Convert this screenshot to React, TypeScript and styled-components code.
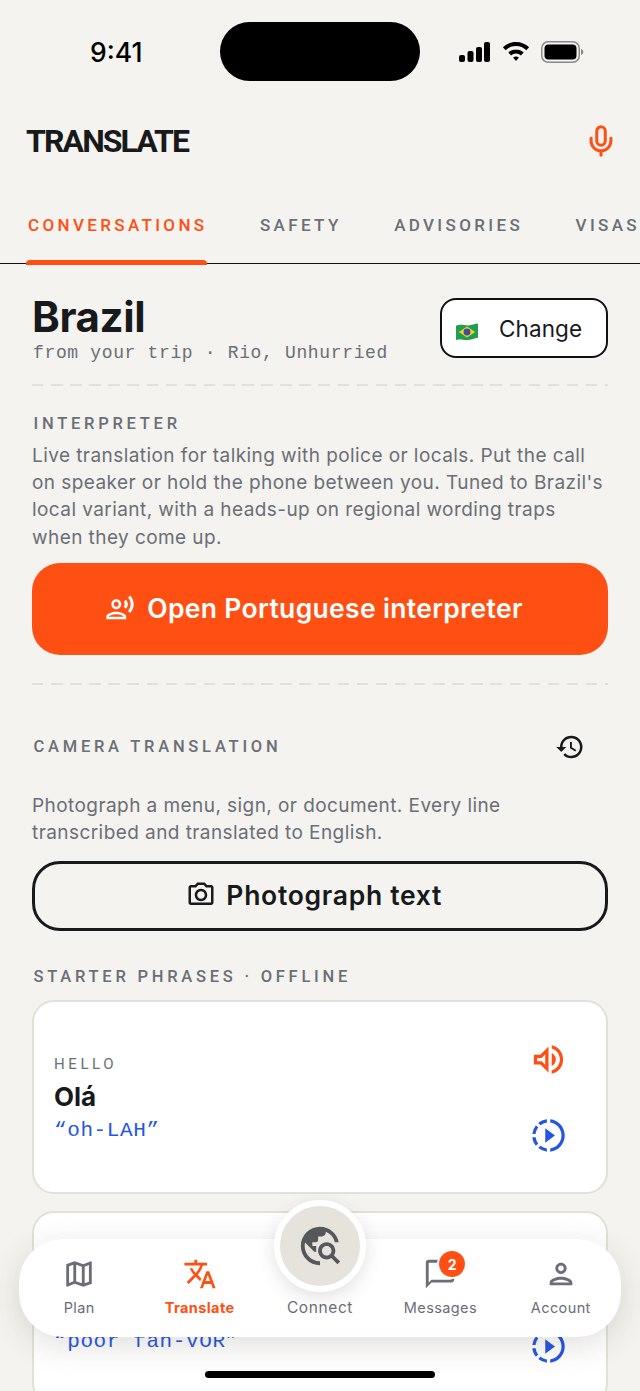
import React from 'react';
import styled, { createGlobalStyle } from 'styled-components';
import { Mic } from 'lucide-react';
import {
    MdHistory,
    MdOutlineChatBubbleOutline,
    MdOutlineMap,
    MdOutlinePerson,
    MdOutlinePhotoCamera,
    MdOutlineRecordVoiceOver,
    MdOutlineSlowMotionVideo,
    MdOutlineVolumeUp,
    MdTranslate,
    MdTravelExplore,
} from 'react-icons/md';

const ORANGE = '#ff4f12';
const INK = '#18191b';
const GREY = '#6b6e76';
const BLUE = '#2456e6';
const LINE = '#e2e0d8';
const PAPER = '#f4f3ef';

const GlobalStyle = createGlobalStyle`
    html, body {
        margin: 0;
        padding: 0;
        background: ${PAPER};
    }
    * {
        box-sizing: border-box;
    }
`;

const Screen = styled.div`
    position: relative;
    width: 640px;
    height: 1391px;
    overflow: hidden;
    background: ${PAPER};
    font-family: Inter, sans-serif;
    color: ${INK};
`;

const StatusBar = styled.div`
    height: 104px;
    display: flex;
    align-items: center;
    justify-content: space-between;
    padding: 0 56px 0 90px;
`;

const Clock = styled.div`
    font-size: 26.5px;
    font-weight: 500;
    color: #000;
`;

const Island = styled.div`
    position: absolute;
    left: 220px;
    top: 22px;
    width: 200px;
    height: 59px;
    border-radius: 30px;
    background: #000;
`;

const StatusIcons = styled.div`
    display: flex;
    align-items: center;
    gap: 11.5px;
`;

const Header = styled.div`
    height: 74px;
    display: flex;
    align-items: center;
    justify-content: space-between;
    padding: 0 22px 0 26px;
`;

const Title = styled.h1`
    margin: 0;
    font-family: Roboto, sans-serif;
    font-size: 32px;
    font-weight: 700;
    letter-spacing: -1.9px;
    color: ${INK};
`;

const MicButton = styled.div`
    display: flex;
    color: ${ORANGE};
`;

const Tabs = styled.div`
    height: 86px;
    display: flex;
    align-items: stretch;
    gap: 50.5px;
    padding-left: 26px;
    border-bottom: 1.5px solid #111;
    white-space: nowrap;
`;

const Tab = styled.div<{ $active?: boolean }>`
    position: relative;
    padding-top: 37px;
    padding-left: 2px;
    font-family: Roboto, sans-serif;
    font-size: 17px;
    font-weight: 500;
    letter-spacing: 3.35px;
    color: ${p => (p.$active ? ORANGE : GREY)};

    ${p =>
        p.$active &&
        `
        &::after {
            content: '';
            position: absolute;
            left: 0;
            right: 0;
            bottom: -1.5px;
            height: 5px;
            border-radius: 4px 4px 0 0;
            background: ${ORANGE};
        }
    `}
`;

const Content = styled.div`
    padding: 0 32px;
`;

const CountryRow = styled.div`
    display: flex;
    justify-content: space-between;
    align-items: flex-start;
    padding-top: 31px;
`;

const CountryName = styled.div`
    font-family: Inter, sans-serif;
    font-size: 42px;
    font-weight: 700;
    line-height: 44px;
    letter-spacing: -0.4px;
`;

const CountrySub = styled.div`
    margin-top: 3px;
    padding-left: 1px;
    font-family: 'Liberation Mono', monospace;
    font-size: 18px;
    line-height: 22px;
    letter-spacing: 0.65px;
    color: ${GREY};
`;

const ChangeButton = styled.div`
    width: 168px;
    height: 60px;
    margin-top: 3px;
    display: flex;
    align-items: center;
    gap: 21px;
    padding-left: 14px;
    background: #fff;
    border: 2px solid #111;
    border-radius: 16px;
    font-size: 22.5px;
    letter-spacing: 0.1px;
`;

const FlagIcon = styled.svg`
    width: 22px;
    height: 18px;
    margin-top: 7px;
`;

const Dashes = styled.div<{ $top: number }>`
    height: 2px;
    margin-top: ${p => p.$top}px;
    background: repeating-linear-gradient(90deg, ${LINE} 0 11.5px, transparent 11.5px 19.1px);
`;

const SectionLabel = styled.div<{ $top: number }>`
    margin-top: ${p => p.$top}px;
    padding-left: 1.5px;
    font-family: Roboto, sans-serif;
    font-size: 16.5px;
    font-weight: 500;
    line-height: 20px;
    letter-spacing: 3.75px;
    color: ${GREY};
`;

const Body = styled.p<{ $top: number }>`
    margin: ${p => p.$top}px 0 0;
    font-size: 19px;
    line-height: 27.2px;
    letter-spacing: 0.43px;
    color: ${GREY};
`;

const PrimaryButton = styled.div`
    height: 92px;
    margin-top: 12px;
    display: flex;
    align-items: center;
    justify-content: center;
    gap: 12px;
    padding: 0 12px 2px 0;
    border-radius: 28px;
    background: ${ORANGE};
    color: #fff;
    font-size: 26.5px;
    font-weight: 600;
    letter-spacing: 0.33px;

    svg {
        font-size: 30px;
    }
`;

const LabelRow = styled.div`
    margin-top: 50px;
    display: flex;
    align-items: center;
    justify-content: space-between;
    padding-right: 23px;
    height: 24px;

    svg {
        font-size: 30px;
        color: ${INK};
    }
`;

const OutlineButton = styled.div`
    height: 70px;
    margin-top: 15px;
    display: flex;
    align-items: center;
    justify-content: center;
    gap: 10.5px;
    padding: 0 12px 2px 0;
    border: 3px solid ${INK};
    border-radius: 28px;
    font-size: 26.5px;
    font-weight: 600;
    letter-spacing: 0.7px;

    svg {
        font-size: 30px;
    }
`;

const PhraseList = styled.div`
    margin-top: 13px;
    display: flex;
    flex-direction: column;
    gap: 17px;
`;

const PhraseCard = styled.div`
    height: 194px;
    display: flex;
    align-items: center;
    justify-content: space-between;
    padding: 0 38px 0 20px;
    background: #fff;
    border: 2px solid ${LINE};
    border-radius: 22px;
`;

const PhraseCopy = styled.div`
    padding-top: 5px;
`;

const PhraseLabel = styled.div`
    font-family: Roboto, sans-serif;
    font-size: 15px;
    font-weight: 400;
    line-height: 20px;
    letter-spacing: 3.6px;
    color: ${GREY};
`;

const PhraseText = styled.div`
    margin-top: 6px;
    font-size: 26px;
    font-weight: 700;
    line-height: 34px;
`;

const PhraseSound = styled.div`
    margin-top: 3px;
    font-family: 'Liberation Mono', monospace;
    font-size: 21px;
    line-height: 28px;
    letter-spacing: 0.6px;
    color: ${BLUE};
`;

const PhraseActions = styled.div`
    display: flex;
    flex-direction: column;
    gap: 37px;
    align-items: center;
`;

const SpeakIcon = styled(MdOutlineVolumeUp)`
    font-size: 39px;
    color: ${ORANGE};
`;

const PlayIcon = styled(MdOutlineSlowMotionVideo)`
    font-size: 39px;
    color: ${BLUE};
`;

const NavBar = styled.div`
    position: absolute;
    left: 19px;
    top: 1239px;
    width: 602px;
    height: 98px;
    display: grid;
    grid-template-columns: repeat(5, 1fr);
    background: #fff;
    border-radius: 44px;
    box-shadow: 0 8px 32px rgba(60, 55, 40, 0.16);
`;

const NavItem = styled.div<{ $active?: boolean }>`
    position: relative;
    display: flex;
    flex-direction: column;
    align-items: center;
    padding-top: 18px;
    font-size: 14.5px;
    font-weight: ${p => (p.$active ? 700 : 400)};
    letter-spacing: 0.4px;
    color: ${p => (p.$active ? ORANGE : GREY)};

    svg {
        font-size: 34px;
    }
`;

const NavLabel = styled.span`
    margin-top: 7px;
    line-height: 20px;
`;

const ConnectSlot = styled(NavItem)`
    justify-content: flex-end;
    padding-bottom: 19px;
    font-size: 15.5px;
    letter-spacing: 0.6px;
`;

const ConnectBubble = styled.div`
    position: absolute;
    left: 50%;
    top: -39px;
    width: 92px;
    height: 92px;
    margin-left: -46px;
    display: flex;
    align-items: center;
    justify-content: center;
    border-radius: 50%;
    background: #e6e3dc;
    border: 6px solid #fff;
    box-shadow: 0 6px 18px rgba(60, 55, 40, 0.14);
    color: #55575b;

    svg {
        font-size: 46px;
    }
`;

const IconWrap = styled.div`
    position: relative;
    display: flex;
`;

const Badge = styled.div`
    position: absolute;
    right: -8px;
    top: -6px;
    width: 26px;
    height: 26px;
    display: flex;
    align-items: center;
    justify-content: center;
    border-radius: 50%;
    background: ${ORANGE};
    box-shadow: 0 0 0 2px #fff;
    color: #fff;
    font-size: 14px;
    font-weight: 700;
`;

const HomeIndicator = styled.div`
    position: absolute;
    left: 205px;
    top: 1371px;
    width: 230px;
    height: 7px;
    border-radius: 4px;
    background: #000;
`;

const SignalIcon = () => (
    <svg width="31" height="20" viewBox="0 0 31 20" fill="#000">
        <rect x="0" y="13" width="6" height="7" rx="2" />
        <rect x="8.5" y="9" width="6" height="11" rx="2" />
        <rect x="17" y="5" width="6" height="15" rx="2" />
        <rect x="25" y="0" width="6" height="20" rx="2" />
    </svg>
);

const WifiIcon = () => (
    <svg width="28" height="20" viewBox="0 0 27 20" fill="#000">
        <path d="M13.5 0C8.4 0 3.8 2 .4 5.2l2.8 3C5.9 5.6 9.5 4 13.5 4s7.6 1.6 10.3 4.2l2.8-3C23.2 2 18.6 0 13.5 0z" />
        <path d="M13.5 7.4c-3 0-5.7 1.2-7.7 3.1l2.8 3c1.3-1.2 3-2 4.9-2s3.6.8 4.9 2l2.8-3c-2-1.9-4.7-3.1-7.7-3.1z" />
        <path d="M13.5 14.4c-1.1 0-2.1.4-2.9 1.1l2.9 3.6 2.9-3.6c-.8-.7-1.800-1.100-2.900-1.100z" />
    </svg>
);

const BatteryIcon = () => (
    <svg width="43" height="22" viewBox="0 0 43 22">
        <rect x="0.75" y="0.75" width="37.5" height="20.5" rx="6.5" fill="none" stroke="#8a8a8a" strokeWidth="1.5" />
        <rect x="3.5" y="3.5" width="32" height="15" rx="4" fill="#000" />
        <path d="M40 8v6c1.4-.4 2.4-1.6 2.4-3S41.400 8.400 40 8z" fill="#8a8a8a" />
    </svg>
);

const BrazilFlag = () => (
    <FlagIcon viewBox="0 0 23 18">
        <path d="M0 2.500C6 0 10 3 14 2s6-1.500 9-2v15c-4 .8-6 1.800-10 2.400-5 .6-8-1.400-13 .1z" fill="#1f9e4f" />
        <path d="M11.500 3.200 20 9l-8.500 5.800L3 9z" fill="#f5cf2b" />
        <circle cx="11.500" cy="9" r="3.600" fill="#3d4f9c" />
    </FlagIcon>
);

const App = () => (
    <Screen>
        <GlobalStyle />
        <StatusBar>
            <Clock>9:41</Clock>
            <StatusIcons>
                <SignalIcon />
                <WifiIcon />
                <BatteryIcon />
            </StatusIcons>
        </StatusBar>
        <Island />
        <Header>
            <Title>TRANSLATE</Title>
            <MicButton>
                <Mic size={34} strokeWidth={2.1} />
            </MicButton>
        </Header>
        <Tabs>
            <Tab $active>CONVERSATIONS</Tab>
            <Tab>SAFETY</Tab>
            <Tab>ADVISORIES</Tab>
            <Tab>VISAS</Tab>
        </Tabs>
        <Content>
            <CountryRow>
                <div>
                    <CountryName>Brazil</CountryName>
                    <CountrySub>from your trip · Rio, Unhurried</CountrySub>
                </div>
                <ChangeButton>
                    <BrazilFlag />
                    Change
                </ChangeButton>
            </CountryRow>
            <Dashes $top={20} />
            <SectionLabel $top={28}>INTERPRETER</SectionLabel>
            <Body $top={8}>
                Live translation for talking with police or locals. Put the call on speaker or hold
                the phone between you. Tuned to Brazil's local variant, with a heads-up on regional
                wording traps when they come up.
            </Body>
            <PrimaryButton>
                <MdOutlineRecordVoiceOver />
                Open Portuguese interpreter
            </PrimaryButton>
            <Dashes $top={28} />
            <LabelRow>
                <SectionLabel $top={0}>CAMERA TRANSLATION</SectionLabel>
                <MdHistory />
            </LabelRow>
            <Body $top={33}>
                Photograph a menu, sign, or document. Every line transcribed and translated to
                English.
            </Body>
            <OutlineButton>
                <MdOutlinePhotoCamera />
                Photograph text
            </OutlineButton>
            <SectionLabel $top={36}>STARTER PHRASES · OFFLINE</SectionLabel>
            <PhraseList>
                <PhraseCard>
                    <PhraseCopy>
                        <PhraseLabel>HELLO</PhraseLabel>
                        <PhraseText>Olá</PhraseText>
                        <PhraseSound>“oh-LAH”</PhraseSound>
                    </PhraseCopy>
                    <PhraseActions>
                        <SpeakIcon />
                        <PlayIcon />
                    </PhraseActions>
                </PhraseCard>
                <PhraseCard>
                    <PhraseCopy>
                        <PhraseLabel>PLEASE</PhraseLabel>
                        <PhraseText>Por favor</PhraseText>
                        <PhraseSound>“poor fah-VOR”</PhraseSound>
                    </PhraseCopy>
                    <PhraseActions>
                        <SpeakIcon />
                        <PlayIcon />
                    </PhraseActions>
                </PhraseCard>
            </PhraseList>
        </Content>
        <NavBar>
            <NavItem>
                <MdOutlineMap />
                <NavLabel>Plan</NavLabel>
            </NavItem>
            <NavItem $active>
                <MdTranslate />
                <NavLabel>Translate</NavLabel>
            </NavItem>
            <ConnectSlot>
                <ConnectBubble>
                    <MdTravelExplore />
                </ConnectBubble>
                <NavLabel>Connect</NavLabel>
            </ConnectSlot>
            <NavItem>
                <IconWrap>
                    <MdOutlineChatBubbleOutline />
                    <Badge>2</Badge>
                </IconWrap>
                <NavLabel>Messages</NavLabel>
            </NavItem>
            <NavItem>
                <MdOutlinePerson />
                <NavLabel>Account</NavLabel>
            </NavItem>
        </NavBar>
        <HomeIndicator />
    </Screen>
);

export default App;
